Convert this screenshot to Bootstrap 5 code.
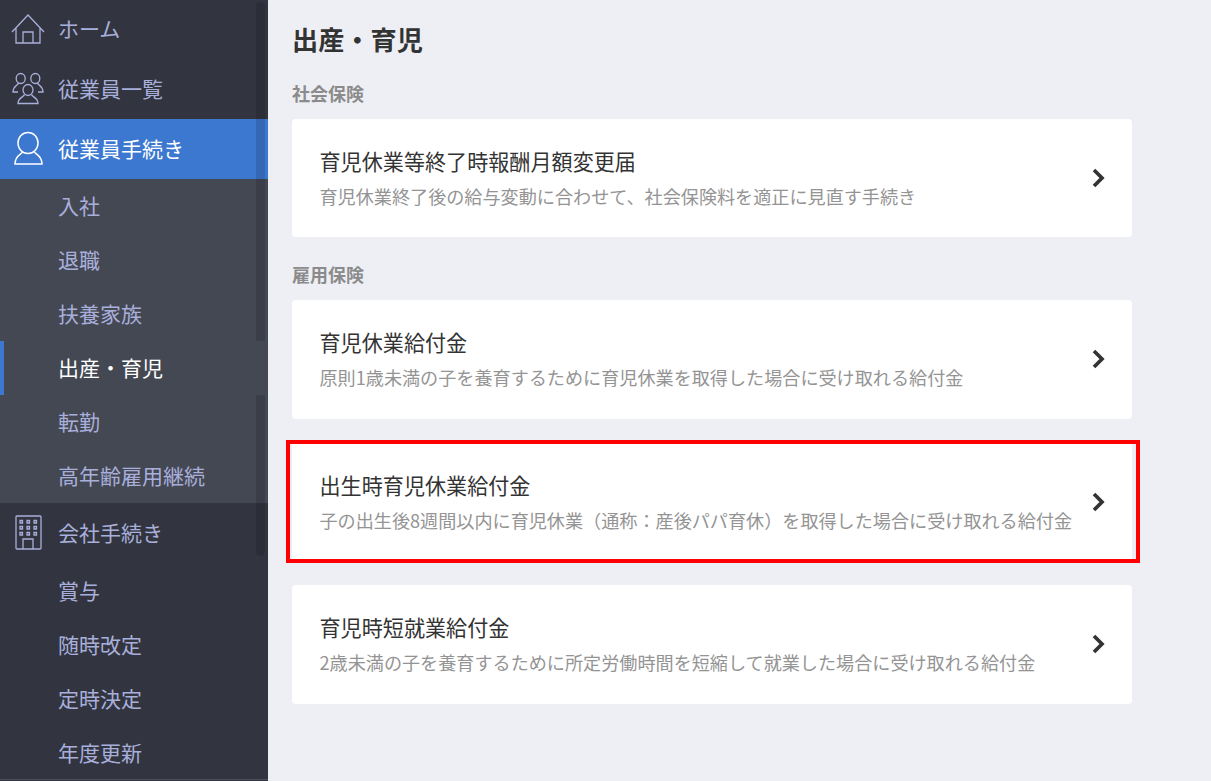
<!DOCTYPE html>
<html lang="ja">
<head>
<meta charset="utf-8">
<title>出産・育児</title>
<link rel="stylesheet" href="https://cdn.jsdelivr.net/npm/bootstrap@5.3.0/dist/css/bootstrap.min.css">
<style>
html,body{height:100%;overflow:hidden}
body{background:#eeeff4;font-family:"Noto Sans CJK JP","Noto Sans",sans-serif;color:#333}
.shell{height:781px}
.side{width:268px;height:781px;background:#32353f;position:relative;overflow:hidden;flex:none}
.side-scroll{position:absolute;left:256px;top:2px;width:9px;height:554px;border-radius:5px;background:rgba(0,0,0,.13)}
.top-item{height:60px;padding-left:58px;font-size:21px;line-height:58px;color:#a9afdb;position:relative}
.top-item.short{height:59px}
.top-item.first{line-height:57px}
.top-item svg{position:absolute;left:10px;top:10px;width:38px;height:38px;fill:none;stroke:currentColor;stroke-width:1.3}
.top-item.on{background:#3c78d0;color:#fff}
.sub-list{background:#444853}
.sub-list.plain{background:transparent}
.sub-item{height:54px;line-height:54px;padding-left:58px;font-size:21px;color:#a9afdb;position:relative}
.sub-list.tight .sub-item{line-height:52px}
.sub-item.cur{background:#444853;color:#fff;z-index:2;box-shadow:inset 4px 0 0 #3c78d0}
.side-end{height:1px;background:#4b4f5a}
.main-pane{padding:19px 0 0 24px;width:864px;flex:none}
.page-h{font-size:26.2px;font-weight:700;line-height:40px;margin:0 0 21px;color:#333}
.sec-h{font-size:18px;font-weight:700;line-height:26px;margin:0 0 13px;color:#8b8b8b}
.sec-h.next{margin-top:24px}
.entry{height:119px;background:#fff;border-radius:4px;padding:0 26px 0 27.5px;position:relative;margin-bottom:23.5px}
.entry.low{height:118px;margin-bottom:0}
.entry:last-child{margin-bottom:0}
.entry-copy{padding-bottom:1.5px}
.entry-t{font-size:21.1px;line-height:30px;color:#333;margin-bottom:7px}
.entry-d{font-size:18.12px;line-height:26px;color:#949494}
.chev{width:14px;height:20px;fill:none;stroke:#333;stroke-width:3.7;flex:none;margin-top:-1px}
.redbox{position:absolute;left:-6px;top:-2.5px;width:853.5px;height:123px;border:4.5px solid #f00;pointer-events:none}
</style>
</head>
<body>
<div class="shell d-flex">
  <nav class="side">
    <div class="top-item short first">
      <svg viewBox="0 0 38 38"><path d="M2 22 18 5l16 17M6 18v15h24V18M13 33V22h10v11"/></svg>ホーム
    </div>
    <div class="top-item">
      <svg viewBox="0 0 38 38"><ellipse cx="10.700" cy="9.500" rx="4.500" ry="5"/><ellipse cx="25.300" cy="9.500" rx="4.500" ry="5"/><path d="M8.500 14c-.5 2.500-5.500 3-5.500 9h5M27.500 14c.5 2.500 5.500 3 5.500 9h-5"/><ellipse cx="18" cy="21" rx="5" ry="5.500"/><path d="M14.500 25.500c-.5 2.500-6.500 3-6.500 9h20c0-6-6-6.500-6.500-9"/></svg>従業員一覧
    </div>
    <div class="top-item on">
      <svg viewBox="0 0 38 38" style="stroke-width:1.500"><ellipse cx="18" cy="14" rx="10" ry="10.500"/><path d="M12.500 23c-1 2.500-7.500 3.500-7.500 12h27c0-8.500-6.500-9.500-7.500-12"/></svg>従業員手続き
    </div>
    <div class="sub-list tight">
      <div class="sub-item">入社</div>
      <div class="sub-item">退職</div>
      <div class="sub-item">扶養家族</div>
      <div class="sub-item cur">出産・育児</div>
      <div class="sub-item">転勤</div>
      <div class="sub-item">高年齢雇用継続</div>
    </div>
    <div class="top-item">
      <svg viewBox="0 0 38 38"><rect x="6" y="3" width="25" height="33" rx="1"/><path d="M13 36V26h10v10"/><path d="M10 7.500h2.500V10H10zM17 7.500h2.500V10H17zM24 7.500h2.500V10H24zM10 13.500h2.500V16H10zM17 13.500h2.500V16H17zM24 13.500h2.500V16H24zM10 19.500h2.500V22H10zM17 19.500h2.500V22H17zM24 19.500h2.500V22H24z"/></svg>会社手続き
    </div>
    <div class="sub-list plain">
      <div class="sub-item">賞与</div>
      <div class="sub-item">随時改定</div>
      <div class="sub-item">定時決定</div>
      <div class="sub-item">年度更新</div>
    </div>
    <div class="side-end"></div>
    <div class="side-scroll"></div>
  </nav>
  <main class="main-pane">
    <h1 class="page-h">出産・育児</h1>
    <h2 class="sec-h">社会保険</h2>
    <div class="entry low d-flex align-items-center justify-content-between">
      <div class="entry-copy"><div class="entry-t">育児休業等終了時報酬月額変更届</div><div class="entry-d">育児休業終了後の給与変動に合わせて、社会保険料を適正に見直す手続き</div></div>
      <svg class="chev" viewBox="0 0 14 20"><path d="M2 2l8 8-8 8"/></svg>
    </div>
    <h2 class="sec-h next">雇用保険</h2>
    <div>
    <div class="entry d-flex align-items-center justify-content-between">
      <div class="entry-copy"><div class="entry-t">育児休業給付金</div><div class="entry-d">原則1歳未満の子を養育するために育児休業を取得した場合に受け取れる給付金</div></div>
      <svg class="chev" viewBox="0 0 14 20"><path d="M2 2l8 8-8 8"/></svg>
    </div>
    <div class="entry d-flex align-items-center justify-content-between">
      <div class="entry-copy"><div class="entry-t">出生時育児休業給付金</div><div class="entry-d">子の出生後8週間以内に育児休業（通称：産後パパ育休）を取得した場合に受け取れる給付金</div></div>
      <svg class="chev" viewBox="0 0 14 20"><path d="M2 2l8 8-8 8"/></svg>
      <div class="redbox"></div>
    </div>
    <div class="entry d-flex align-items-center justify-content-between">
      <div class="entry-copy"><div class="entry-t">育児時短就業給付金</div><div class="entry-d">2歳未満の子を養育するために所定労働時間を短縮して就業した場合に受け取れる給付金</div></div>
      <svg class="chev" viewBox="0 0 14 20"><path d="M2 2l8 8-8 8"/></svg>
    </div>
    </div>
  </main>
</div>
<script src="https://cdn.jsdelivr.net/npm/bootstrap@5.3.0/dist/js/bootstrap.bundle.min.js"></script>
</body>
</html>
